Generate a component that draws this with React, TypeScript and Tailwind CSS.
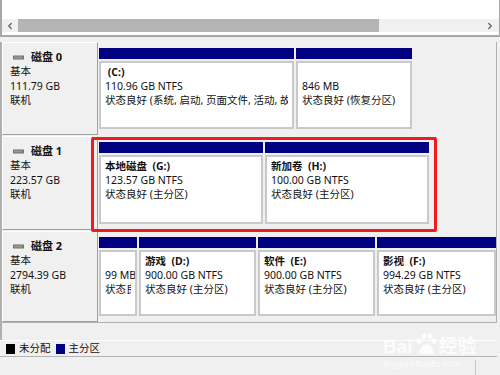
import { ChevronLeft, ChevronRight } from "lucide-react";

// 磁盘管理（下半部分）的截图复刻：磁盘行 + 分区块 + 图例
type Part = { w: number; title: string; size: string; status: string };
type Disk = { name: string; size: string; h: number; parts: Part[] };

const DISKS: Disk[] = [
  {
    name: "磁盘 0",
    size: "111.79 GB",
    h: 93,
    parts: [
      { w: 195, title: " (C:)", size: "110.96 GB NTFS", status: "状态良好 (系统, 启动, 页面文件, 活动, 故障转储, 主分区)" },
      { w: 116, title: "", size: "846 MB", status: "状态良好 (恢复分区)" },
    ],
  },
  {
    name: "磁盘 1",
    size: "223.57 GB",
    h: 94,
    parts: [
      { w: 164, title: "本地磁盘  (G:)", size: "123.57 GB NTFS", status: "状态良好 (主分区)" },
      { w: 164, title: "新加卷  (H:)", size: "100.00 GB NTFS", status: "状态良好 (主分区)" },
    ],
  },
  {
    name: "磁盘 2",
    size: "2794.39 GB",
    h: 91,
    parts: [
      { w: 38, title: "", size: "99 MB", status: "状态良好 (EFI 系统分区)" },
      { w: 117, title: "游戏  (D:)", size: "900.00 GB NTFS", status: "状态良好 (主分区)" },
      { w: 117, title: "软件  (E:)", size: "900.00 GB NTFS", status: "状态良好 (主分区)" },
      { w: 119, title: "影视  (F:)", size: "994.29 GB NTFS", status: "状态良好 (主分区)" },
    ],
  },
];

function DiskIcon() {
  return (
    <svg width="11" height="5" viewBox="0 0 11 5" className="flex-none">
      <rect x="0" y="0.5" width="11" height="4" rx="0.5" fill="#6e6e6e" />
      <rect x="1" y="1.5" width="9" height="2" fill="#9a9a9a" />
      <rect x="8" y="2" width="2" height="1" fill="#3cc23c" />
    </svg>
  );
}

function PartBox({ p }: { p: Part }) {
  return (
    <div className="flex flex-none flex-col" style={{ width: p.w }}>
      <div className="h-[11px] bg-[#000080]" />
      <div className="mt-[2px] flex-1 overflow-hidden border-2 border-[#c9c9c9] bg-white px-[4px] pt-[2px] leading-[14px] whitespace-pre">
        <div className="h-[14px] font-bold">{p.title}</div>
        <div>{p.size}</div>
        <div className="overflow-hidden">{p.status}</div>
      </div>
    </div>
  );
}

function DiskRow({ d }: { d: Disk }) {
  return (
    <div className="flex" style={{ height: d.h }}>
      <div className="w-[96px] flex-none border-t border-l border-white border-r border-b border-r-[#a0a0a0] border-b-[#a0a0a0] pl-[7px] pt-[7px] leading-[14.3px]">
        <div className="flex items-center gap-[7px] pl-[3px] text-[11px] font-bold">
          <DiskIcon />
          <span>{d.name}</span>
        </div>
        <div>基本</div>
        <div>{d.size}</div>
        <div>联机</div>
      </div>
      <div className="ml-[1px] flex gap-[2px] pt-[6px] pb-[6px]">
        {d.parts.map((p, i) => (
          <PartBox key={i} p={p} />
        ))}
      </div>
    </div>
  );
}

export default function App() {
  return (
    <div className="relative flex h-[375px] w-[500px] flex-col overflow-hidden bg-[#f0f0f0] font-['Noto_Sans','Noto_Sans_CJK_SC',sans-serif] text-[10.5px] text-[#111]">
      {/* 上半部分：卷列表底部 + 横向滚动条 */}
      <div className="flex h-[37px] flex-none flex-col border-l-2 border-r border-b-2 border-[#a7a7a7] bg-white">
        <div className="h-[19px]" />
        <div className="flex h-[13px] items-center bg-[#f0f0f0] text-[#606060]">
          <ChevronLeft size={10} strokeWidth={3} className="ml-[3px] mr-[3px]" />
          <div className="h-full w-[361px] bg-[#b4b4b4]" />
          <ChevronRight size={10} strokeWidth={3} className="ml-auto mr-[4px]" />
        </div>
      </div>

      {/* 下半部分：磁盘列表 */}
      <div className="mt-[5px] flex h-[281px] w-[497px] flex-none flex-col gap-[1px] border-l-2 border-r border-b border-[#b0b0b0]">
        {DISKS.map((d) => (
          <DiskRow key={d.name} d={d} />
        ))}
      </div>

      {/* 图例 */}
      <div className="h-[17px] flex-none border-l-2 border-[#b0b0b0]" />
      <div className="flex h-[17px] w-[497px] flex-none items-center gap-[4px] border-t border-t-white border-b border-b-[#b4b4b4] pl-[6px] text-[10.5px]">
        <span className="h-[10px] w-[9px] bg-black" />
        <span className="mr-[1px]">未分配</span>
        <span className="h-[10px] w-[9px] bg-[#000080]" />
        <span>主分区</span>
      </div>
      <div className="flex flex-1 justify-end pr-[24px] pt-[3px]">
        <div className="h-full w-px bg-[#c8c8c8]" />
      </div>

      {/* 标注红框 */}
      <div className="absolute left-[91px] top-[137px] h-[95px] w-[346px] rounded-[2px] border-[3px] border-[#f01c1c]" />

      {/* 水印 */}
      <div className="pointer-events-none absolute left-[383px] top-[332px] flex flex-col items-start text-white opacity-80">
        <div className="flex items-end font-['Liberation_Sans','Noto_Sans_CJK_SC',sans-serif] text-[19px] leading-none font-bold">
          <span>Bai</span>
          <svg width="26" height="24" viewBox="0 0 26 24">
            <ellipse cx="6" cy="9" rx="2.5" ry="3" fill="white" />
            <ellipse cx="11" cy="4" rx="2.5" ry="3" fill="white" />
            <ellipse cx="17" cy="4" rx="2.5" ry="3" fill="white" />
            <ellipse cx="21" cy="9" rx="2.5" ry="3" fill="white" />
            <path d="M6 22 Q7 13 13.5 12 Q20 13 21 22 Z" fill="white" />
          </svg>
          <span>经验</span>
        </div>
        <div className="mt-[3px] text-[9px] leading-none">jingyan.baidu.com</div>
      </div>
    </div>
  );
}
